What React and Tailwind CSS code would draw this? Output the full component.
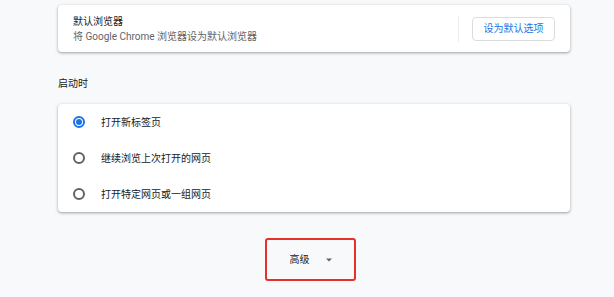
import React from "react";

const font = { fontFamily: '"Roboto", "Noto Sans CJK SC", sans-serif' };

function Radio({ checked }) {
  return checked ? (
    <div className="w-[12px] h-[12px] rounded-full border-2 border-[#1a73e8] flex items-center justify-center shrink-0">
      <div className="w-[6px] h-[6px] rounded-full bg-[#1a73e8]" />
    </div>
  ) : (
    <div className="w-[12px] h-[12px] rounded-full border-2 border-[#5f6368] shrink-0" />
  );
}

export default function App() {
  const rows = [
    { label: "打开新标签页", checked: true },
    { label: "继续浏览上次打开的网页", checked: false },
    { label: "打开特定网页或一组网页", checked: false },
  ];
  return (
    <div
      className="w-[614px] h-[297px] bg-[#f8f9fa] overflow-hidden"
      style={font}
    >
      <div className="ml-[58px] w-[512px] pt-[5px] flex flex-col">
        <div className="h-[47px] bg-white rounded-[4px] shadow-[0_1px_2px_rgba(60,64,67,0.3),0_1px_3px_1px_rgba(60,64,67,0.15)] flex items-center pl-[15px] pr-[15px]">
          <div className="flex-1 flex flex-col">
            <div className="text-[10px] leading-[15px] text-[#202124]">默认浏览器</div>
            <div className="text-[10px] leading-[15px] text-[#5f6368]">
              将 Google Chrome 浏览器设为默认浏览器
            </div>
          </div>
          <div className="w-px h-[26px] bg-[#eceef0] mr-[13px]" />
          <div className="w-[83px] h-[24px] border border-[#dadce0] rounded-[4px] flex items-center justify-center text-[10px] text-[#1a73e8]">
            设为默认选项
          </div>
        </div>

        <div className="h-[52px] pt-[24px]">
          <div className="text-[10px] leading-[15px] text-[#202124]">启动时</div>
        </div>

        <div className="bg-white rounded-[4px] shadow-[0_1px_2px_rgba(60,64,67,0.3),0_1px_3px_1px_rgba(60,64,67,0.15)] flex flex-col">
          {rows.map((r) => (
            <div key={r.label} className="h-[36px] flex items-center pl-[15px]">
              <Radio checked={r.checked} />
              <div className="ml-[16px] text-[10px] leading-[15px] text-[#202124]">
                {r.label}
              </div>
            </div>
          ))}
        </div>

        <div className="mt-[26px] ml-[207px] w-[91px] h-[43px] border-2 border-[#e8302a] rounded-[3px] flex items-center justify-center">
          <span className="text-[10px] leading-[15px] text-[#202124]">高级</span>
          <svg className="ml-[16px]" width="6" height="4" viewBox="0 0 6 4">
            <path d="M0 0.5 L6 0.5 L3 3.5 Z" fill="#5f6368" />
          </svg>
        </div>
      </div>
    </div>
  );
}
